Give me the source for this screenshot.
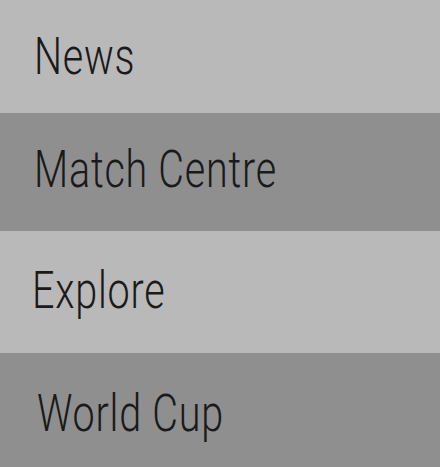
const items = [
  { label: "News", cls: "h-[113px] bg-[#b9b9b9] pl-[34px] pt-[31px]" },
  { label: "Match Centre", cls: "h-[118px] bg-[#8f8f8f] pl-[34px] pt-[31px]" },
  { label: "Explore", cls: "h-[122px] bg-[#b9b9b9] pl-[32px] pt-[34px]" },
  { label: "World Cup", cls: "h-[114px] bg-[#8f8f8f] pl-[37px] pt-[35px]" },
];

export default function App() {
  return (
    <nav className="w-[440px] h-[467px] overflow-hidden font-['Roboto',sans-serif]">
      {items.map((item) => (
        <div key={item.label} className={item.cls}>
          <span className="inline-block origin-left scale-x-[0.76] whitespace-nowrap text-[52px] leading-none font-light text-[#1a1a1a] tracking-[1px]">
            {item.label}
          </span>
        </div>
      ))}
    </nav>
  );
}
